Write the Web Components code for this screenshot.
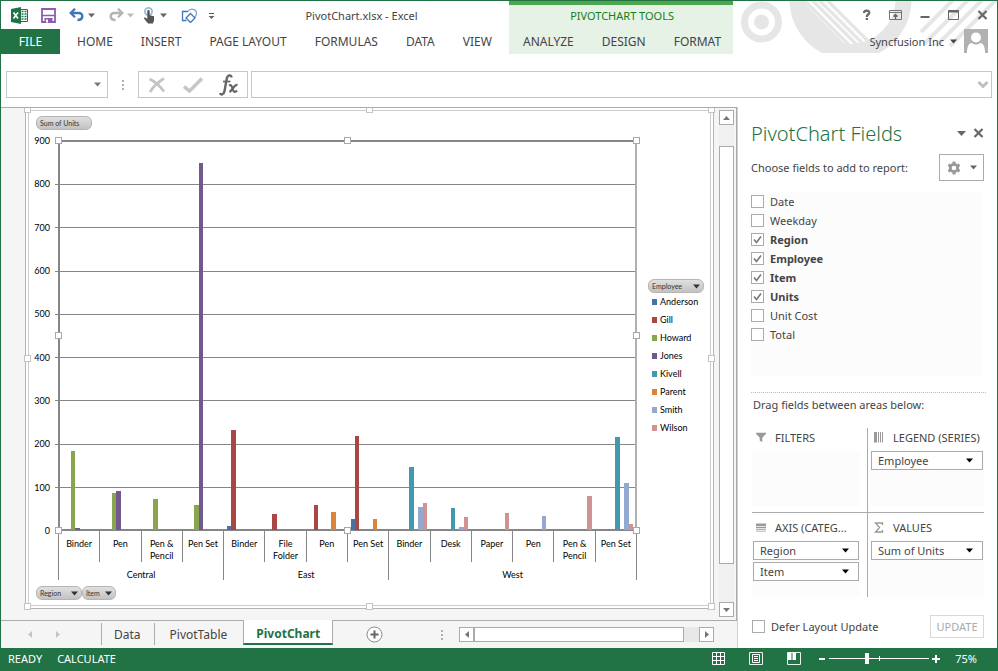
<!DOCTYPE html>
<html lang="en">
<head>
<meta charset="utf-8">
<title>PivotChart.xlsx - Excel</title>
<style>
html, body { margin: 0; height: 100%; }
body { font-family: "Noto Sans", "Open Sans", sans-serif; font-size: 11px; color: #444; background: #fff; --green: #217346; --line: #ababab; }
</style>
</head>
<body>
<excel-window></excel-window>
<script>
const define = (name, css, html, setup) => {
  const tpl = document.createElement('template');
  tpl.innerHTML = `<style>:host,*{box-sizing:border-box}button,input,select{font:inherit;color:inherit;margin:0}button{background:none;border:0;padding:0;display:inline-flex;align-items:center;justify-content:center}${css}</style>`;
  customElements.define(name, class extends HTMLElement {
    constructor() { super(); this.attachShadow({ mode: 'open' }); }
    connectedCallback() {
      if (this.shadowRoot.childNodes.length) return;
      this.shadowRoot.append(tpl.content.cloneNode(true));
      const body = document.createElement('template');
      body.innerHTML = typeof html === 'function' ? html(this) : html;
      this.shadowRoot.append(body.content.cloneNode(true));
      if (setup) setup(this);
    }
  });
};

/* Icons: [width, height, drawing] */
const icons = {
  excel: [17, 17, '<path d="M9 2.5h7.5v12H9z" fill="#fff" stroke="#217346"/><path d="M10.5 4.5h2M13.5 4.5h2M10.5 7h2M13.5 7h2M10.5 9.500h2M13.500 9.500h2M10.500 12h2M13.500 12h2" stroke="#217346" stroke-width="1.500"/><path d="M0 2L10 0v17L0 15z" fill="#217346"/><path d="M2.500 5.500L7 11.500M7 5.500L2.500 11.500" stroke="#fff" stroke-width="1.700"/>'],
  save: [15, 15, '<path d="M1 1h13v13H1z" fill="#fff" stroke="#8e5bb0" stroke-width="1.800"/><path d="M1 7.500h13" stroke="#8e5bb0" stroke-width="1.500"/><path d="M3.500 10h8v4.500h-8z" fill="#8e5bb0"/><path d="M5 11.500h2v3H5z" fill="#fff"/>'],
  undo: [16, 14, '<path d="M3 5H9.500C15 5 14.500 12 8.500 12" fill="none" stroke="#3f77b8" stroke-width="2.400"/><path d="M6 .7L1.700 5 6 9.300" fill="none" stroke="#3f77b8" stroke-width="2.300"/>'],
  redo: [16, 14, '<path d="M13 5H6.500C1 5 1.500 12 7.500 12" fill="none" stroke="#b4b4b4" stroke-width="2.400"/><path d="M10 .7L14.300 5 10 9.300" fill="none" stroke="#b4b4b4" stroke-width="2.300"/>'],
  touch: [14, 17, '<circle cx="5.500" cy="4.500" r="3.600" fill="none" stroke="#9dbbd8" stroke-width="1.800"/><path d="M4.300 4.300c0-1.700 2.400-1.700 2.400 0v4l4.300 1v4.200l-1 3H5L1 11.500c-.5-1.500 1.500-1.500 3.300.5z" fill="#555"/>'],
  shapes: [17, 15, '<path d="M7 3.500H1.500v9h4" fill="none" stroke="#3f77b8" stroke-width="1.300"/><path d="M7 3.500C9 0 15.500.5 15.500 5.500c0 2-1 3-2 4" fill="none" stroke="#7ba6d3" stroke-width="1.300"/><path d="M9.500 5.500L14 10l-4.500 4.500L5 10z" fill="#fff" stroke="#3f77b8" stroke-width="1.300"/>'],
  custom: [7, 9, '<path d="M1 2.500h5" stroke="#555"/><path d="M.5 5h6l-3 3z" fill="#666"/>'],
  caret: [7, 5, '<path d="M0 .5h7l-3.500 4z" fill="currentColor"/>'],
  bigcaret: [9, 5, '<path d="M0 0h9L4.500 5z" fill="currentColor"/>'],
  up: [9, 6, '<path d="M1 5h7L4.500 1z" fill="#777"/>'],
  down: [9, 6, '<path d="M1 1h7L4.500 5z" fill="#777"/>'],
  left: [6, 9, '<path d="M5 1v7L1 4.500z" fill="currentColor"/>'],
  right: [6, 9, '<path d="M1 1v7l4-3.500z" fill="currentColor"/>'],
  help: [10, 12, '<path d="M2 4C2 .8 7.500 .8 7.300 3.700 7 5.500 4.800 5.500 4.800 8" fill="none" stroke="#666" stroke-width="2.200"/><path d="M3.700 9h2.300v2H3.700z" fill="#666"/>'],
  ribbonopt: [13, 11, '<path d="M.5 .5h12v9H.500zM.500 2.500h12" fill="none" stroke="#777"/><path d="M6.500 9V4.500M4.500 6.500l2-2 2 2" fill="none" stroke="#666" stroke-width="1.300"/>'],
  minimise: [10, 10, '<path d="M.5 7h9" stroke="#666" stroke-width="2"/>'],
  maximise: [11, 10, '<path d="M.500 .5h10v9H.500z" fill="none" stroke="#666"/><path d="M0 1.500h11" stroke="#666" stroke-width="2"/>'],
  close: [11, 10, '<path d="M1.500 1l8 8M9.500 1l-8 8" stroke="#6a6a6a" stroke-width="2.300"/>'],
  avatar: [24, 24, '<path d="M0 0h24v24H0z" fill="#b1b1b1"/><circle cx="12" cy="8.500" r="5" fill="#fff"/><path d="M3 24c0-7 2-10 5-10 2 2 6 2 8 0 3 0 5 3 5 10h-1.500v-5v5H4.500z" fill="#fff"/>'],
  grip: [3, 12, '<path d="M0 1h2v2H0zM0 5h2v2H0zM0 9h2v2H0z" fill="#b0b0b0"/>'],
  cancel: [18, 16, '<path d="M1.500 2C6 4 12 9 16 14.500M16 1.500C10 5 5 10 2 15" fill="none" stroke="#c4c4c4" stroke-width="2.700"/>'],
  enter: [20, 16, '<path d="M1 9.500l5.500 4.500L19 1.500" fill="none" stroke="#c6c6c6" stroke-width="3.500"/>'],
  fx: [20, 22, '<path d="M12.500 3.500C12.500.5 8.500.5 7.700 5L5.500 17c-.7 4-4 4.500-4.300 2" fill="none" stroke="#666" stroke-width="2.400"/><path d="M4 7.500h7.500" stroke="#666" stroke-width="1.700"/><path d="M10 11.500c4-2 3 6 5.500 6.300 1 .1 2-.6 2.500-1.300M18.500 11c-3-.8-5 5-8 7" fill="none" stroke="#666" stroke-width="2.200"/>'],
  chevron: [12, 9, '<path d="M1.500 2L6 6.500 10.500 2" fill="none" stroke="#c0c0c0" stroke-width="3"/>'],
  gear: [14, 14, '<circle cx="7" cy="7" r="3.700" fill="none" stroke="#999" stroke-width="2.800"/><path d="M7 .5v2.500M7 11v2.500M1.400 3.700l2 1.200M10.600 9.100l2 1.200M1.400 10.300l2-1.200M10.600 4.900l2-1.200" stroke="#999" stroke-width="3"/>'],
  filter: [12, 12, '<path d="M0 1h12v1L7.500 7v5l-3-1.500V7L0 2z" fill="#999"/>'],
  legend: [10, 11, '<path d="M0 0h3v10.500H0zM4 0h1v10.500H4zM6 0h1v10.500H6zM8 0h1v10.500H8z" fill="#999"/>'],
  axis: [11, 11, '<path d="M0 1h11v3H0zM0 5h11v1H0zM0 7h11v1H0zM0 9h11v1H0z" fill="#999"/>'],
  sigma: [10, 11, '<path d="M8.500 3V1H1.500L5.500 5.500 1.500 10h7V8" fill="none" stroke="#999" stroke-width="1.400"/>'],
  add: [17, 17, '<circle cx="8.500" cy="8.500" r="7.500" fill="#fff" stroke="#888"/><path d="M8.500 4.500v8M4.500 8.500h8" stroke="#666" stroke-width="2"/>'],
  normal: [13, 13, '<path d="M.5 .5h12v12H.500zM4.500 0v13M8.500 0v13M0 4.500h13M0 8.500h13" fill="none" stroke="#fff"/>'],
  layout: [14, 13, '<path d="M.5 .5h13v12H.500z" fill="none" stroke="#e8f3ec"/><path d="M3.500 2.500h7v8h-7zM5 4.500h4M5 6.500h4M5 8.500h4" fill="none" stroke="#fff"/>'],
  breaks: [14, 13, '<path d="M.5 .5h13v12H.500z" fill="none" stroke="#e8f3ec"/><path d="M1 1h3.500v7H1zM5.500 1H9v7H5.500z" fill="#fff"/>'],
  minus: [8, 8, '<path d="M1 4h6" stroke="#fff" stroke-width="2"/>'],
  plus: [8, 8, '<path d="M0 4h8M4 0v8" stroke="#fff" stroke-width="2"/>'],
  tick: [13, 13, '<path d="M3 6.500l2.500 3L10 3.500" fill="none" stroke="#777" stroke-width="1.600"/>']
};
define('ui-icon', ':host{display:inline-flex;flex:none}svg{display:block}', el => {
  const [w, h, d] = icons[el.getAttribute('name')];
  return `<svg width="${w}" height="${h}" viewBox="0 0 ${w} ${h}" aria-hidden="true">${d}</svg>`;
});

define('quick-access', `
  :host{display:flex;align-items:center;padding-left:10px;color:#666}
  button{height:28px;width:16px} .save{width:42px} .redo{margin-left:11px} .touch{margin-left:7px;width:14px} .shapes{margin:0 8px 0 12px} .c{width:12px} .dim{color:#bbb}`,
  `<button aria-label="Excel"><ui-icon name="excel"></ui-icon></button>
   <button class="save" aria-label="Save"><ui-icon name="save"></ui-icon></button>
   <button aria-label="Undo"><ui-icon name="undo"></ui-icon></button><button class="c" aria-label="Undo list"><ui-icon name="caret"></ui-icon></button>
   <button class="redo" aria-label="Redo"><ui-icon name="redo"></ui-icon></button><button class="c dim" aria-label="Redo list"><ui-icon name="caret"></ui-icon></button>
   <button class="touch" aria-label="Touch mode"><ui-icon name="touch"></ui-icon></button><button class="c" aria-label="Touch list"><ui-icon name="caret"></ui-icon></button>
   <button class="shapes" aria-label="Shapes"><ui-icon name="shapes"></ui-icon></button>
   <button aria-label="Customize" class="c"><ui-icon name="custom"></ui-icon></button>`);

define('ribbon-tab', `
  :host{display:block} button{height:25px;padding:0 14px;font-size:12px;white-space:nowrap}
  :host([file]) button{background:var(--green);color:#fff;width:59px;padding:0;margin-right:3px}`,
  '<button role="tab"><slot></slot></button>');

define('window-header', `
  :host{display:grid;grid-template-columns:minmax(0,508fr) 224px minmax(0,264fr);height:53px}
  .left{display:grid;grid-template-rows:28px 25px}
  .title{display:flex} .title span{flex:1;text-align:center;font-size:11px;line-height:29px;padding-right:3px}
  .tabs{display:flex}
  .tools{background:#e6f2e6;border-top:4px solid #4ca64c;display:grid;grid-template-rows:24px 25px}
  .tools p{margin:0;text-align:center;color:#128012;font-size:11px;line-height:22px;padding-right:3px}
  .tools .tabs{padding-right:3px;justify-content:center}
  .right{display:grid;grid-template-rows:28px 25px}
  .deco{grid-area:1/1/3/2;justify-self:start;overflow:hidden;height:53px}
  .win{grid-area:1/1;display:flex;justify-content:flex-end} .win button{width:29px;height:28px}
  .who{grid-area:2/1;display:flex;justify-content:flex-end;align-items:flex-start;padding-right:9px;gap:7px}
  .who button{height:24px;gap:6px;font-size:11px}`,
  `<div class="left"><div class="title"><quick-access></quick-access><span>PivotChart.xlsx - Excel</span></div>
   <div class="tabs" role="tablist"><ribbon-tab file>FILE</ribbon-tab><ribbon-tab>HOME</ribbon-tab><ribbon-tab>INSERT</ribbon-tab><ribbon-tab>PAGE LAYOUT</ribbon-tab><ribbon-tab>FORMULAS</ribbon-tab><ribbon-tab>DATA</ribbon-tab><ribbon-tab>VIEW</ribbon-tab></div></div>
   <div class="tools"><p>PIVOTCHART TOOLS</p><div class="tabs" role="tablist"><ribbon-tab>ANALYZE</ribbon-tab><ribbon-tab>DESIGN</ribbon-tab><ribbon-tab>FORMAT</ribbon-tab></div></div>
   <div class="right">
    <svg class="deco" width="264" height="53" viewBox="733 1 264 53" aria-hidden="true">
      <defs><clipPath id="disc"><circle cx="850.5" cy="-1" r="60"/></clipPath><clipPath id="frame"><path d="M733 1h264v52H733z"/></clipPath></defs>
      <g fill="none" stroke="#e6e6e6" clip-path="url(#frame)">
        <circle cx="761.5" cy="22" r="17" stroke-width="7"/><circle cx="761.5" cy="22" r="7.500" fill="#e6e6e6" stroke="none"/>
        <circle cx="850.5" cy="-1" r="53" stroke-width="16"/>
        <g clip-path="url(#disc)" stroke-width="3.500"><path d="M803 -1l60 60M811 -1l60 60M818 -1l60 60M826 -1l60 60"/><path d="M794 0l60 60" stroke-width="10"/></g>
        <path d="M957 -4l-36 36M972 -4l-48 48M986 -4l-50 50M1000 -4l-50 50" stroke-width="4"/>
      </g></svg>
    <div class="win"><button aria-label="Help"><ui-icon name="help"></ui-icon></button><button aria-label="Ribbon options"><ui-icon name="ribbonopt"></ui-icon></button><button aria-label="Minimize"><ui-icon name="minimise"></ui-icon></button><button aria-label="Maximize"><ui-icon name="maximise"></ui-icon></button><button aria-label="Close"><ui-icon name="close"></ui-icon></button></div>
    <div class="who"><button>Syncfusion Inc <ui-icon name="caret"></ui-icon></button><ui-icon name="avatar"></ui-icon></div>
   </div>`);

define('formula-bar', `
  :host{display:flex;align-items:stretch;padding:17px 5px 9px;height:53px}
  .box{border:1px solid #c6c6c6;display:flex;align-items:center;background:#fff}
  .name{width:102px;padding-right:6px;color:#777} input{flex:1;min-width:0;border:0;outline:0;background:none;padding:0 4px}
  .grip{width:30px;display:flex;align-items:center;justify-content:center}
  .fn{width:110px;margin-right:3px} .fn button{flex:1;height:100%} .text{flex:1;padding-right:2px}`,
  `<div class="box name"><input aria-label="Name box"><ui-icon name="caret"></ui-icon></div>
   <div class="grip"><ui-icon name="grip"></ui-icon></div>
   <div class="box fn"><button aria-label="Cancel"><ui-icon name="cancel"></ui-icon></button><button aria-label="Enter"><ui-icon name="enter"></ui-icon></button><button aria-label="Insert function"><ui-icon name="fx"></ui-icon></button></div>
   <div class="box text"><input aria-label="Formula"><ui-icon name="chevron"></ui-icon></div>`);

define('scroll-bar', `
  :host{display:flex;background:#e8e8e8;color:#777} button{width:15px;height:15px;background:#fff;border:1px solid var(--line);flex:none}
  .thumb{background:#fff;border:1px solid var(--line)}
  :host([vertical]){flex-direction:column;width:15px;background:#f0f0f0} .lead{flex:0 0 auto}
  :host([vertical]) .lead{height:21px} :host([vertical]) .thumb{flex:1} :host([vertical]) .tail{height:38px}
  :host(:not([vertical])) .thumb{flex:1} :host(:not([vertical])) .tail{width:15px}`,
  el => { const v = el.hasAttribute('vertical'); return `<button aria-label="Back"><ui-icon name="${v ? 'up' : 'left'}"></ui-icon></button><div class="lead"></div><div class="thumb"></div><div class="tail"></div><button aria-label="Forward"><ui-icon name="${v ? 'down' : 'right'}"></ui-icon></button>`; });

define('field-pill', `
  :host{display:inline-flex} button{height:14px;min-width:var(--w,56px);padding:0 3px;justify-content:space-between;gap:3px;border:1px solid #b5b5b5;border-radius:6px;background:linear-gradient(#e0e0e0,#c2c2c2);font:7px "Lato",sans-serif;color:#333;white-space:nowrap}`,
  el => `<button><slot></slot>${el.hasAttribute('menu') ? '<ui-icon name="caret"></ui-icon>' : ''}</button>`);

/* Eight grips round a selected box */
define('grip-frame', `
  :host{position:absolute;inset:0;pointer-events:none;display:grid;grid-template-columns:repeat(3,7px);grid-template-rows:repeat(3,7px);justify-content:space-between;align-content:space-between;margin:-2px;z-index:2}
  :host([wide]){margin:-5px}
  i{background:#fff;border:1px solid #c4c4c4} :host([wide]) i{border-color:#a8a8a8} .skip{visibility:hidden}`,
  '<i></i><i></i><i></i><i></i><i class="skip"></i><i></i><i></i><i></i><i></i>');

const series = [['Anderson', '#4572a7'], ['Gill', '#aa4643'], ['Howard', '#89a54e'], ['Jones', '#71588f'], ['Kivell', '#4198af'], ['Parent', '#db843d'], ['Smith', '#93a9cf'], ['Wilson', '#d19392']];
const regions = [
  ['Central', [['Binder', { 2: 183, 3: 4 }], ['Pen', { 2: 86, 3: 90 }], ['Pen & Pencil', { 2: 72 }], ['Pen Set', { 2: 58, 3: 848 }]]],
  ['East', [['Binder', { 0: 9, 1: 231 }], ['File Folder', { 1: 37 }], ['Pen', { 1: 57, 5: 42 }], ['Pen Set', { 0: 26, 1: 217, 5: 26 }]]],
  ['West', [['Binder', { 4: 146, 6: 53, 7: 63 }], ['Desk', { 4: 51, 6: 7, 7: 30 }], ['Paper', { 7: 39 }], ['Pen', { 6: 32 }], ['Pen & Pencil', { 7: 78 }], ['Pen Set', { 4: 215, 6: 109, 7: 14 }]]]
];
const items = regions.flatMap(r => r[1]);
const esc = s => s.replace('&', '&amp;');

define('pivot-chart', `
  :host{display:block;position:relative;background:#fff;border:1px solid #b4b4b4;border-top:0;padding:2px;font:9px/12px "Lato",sans-serif;color:#000}
  .in{height:100%;border:1px solid #ccc;display:grid;grid-template-columns:29px minmax(0,1fr) 73px;grid-template-rows:29px minmax(0,1fr) 49px 25px}
  .top{grid-area:1/1/2/3;padding:5px 0 0 7px}
  .y{grid-area:2/1;display:flex;flex-direction:column;justify-content:space-between;margin:-5px 0 -6px;text-align:right;padding-right:8px}
  .plot{grid-area:2/2;display:grid;position:relative;border:2px solid #868686;border-color:#868686 #b0b0b0 #868686 #868686}
  .lines{grid-area:1/1;display:grid;grid-template-rows:repeat(9,1fr);margin:-1px 0 -1px -5px} .lines i{border-top:1px solid #868686}
  .bars{grid-area:1/1;display:grid;grid-template-columns:repeat(14,1fr);z-index:1;margin:-2px -1px -1px}
  .group{display:grid;grid-template-columns:repeat(8,1fr);grid-template-rows:100%;align-items:end;padding:0 3px}
  .x{grid-area:3/2;display:grid;grid-template-columns:repeat(14,1fr);grid-template-rows:31px 18px;text-align:center;border-right:1px solid #868686}
  .x span{border-left:1px solid #868686;padding:7px 4px 0;min-width:0} .x .r{padding:7px 0 0}
  .x .s{padding-inline:0;white-space:nowrap}
  .bottom{grid-area:4/1/5/3;padding:6px 0 0 7px;display:flex;align-items:flex-start}
  .legend{grid-area:1/3/5/4;align-self:center;padding-left:11px}
  ul{list-style:none;margin:0;padding:0 0 0 4px} li{display:flex;align-items:center;gap:3px;height:18px} li i{width:5px;height:6px}`,
  () => `<div class="in"><div class="top"><field-pill>Sum of Units</field-pill></div>
   <div class="y">${[900, 800, 700, 600, 500, 400, 300, 200, 100, 0].map(n => `<span>${n}</span>`).join('')}</div>
   <div class="plot"><div class="lines">${'<i></i>'.repeat(9)}</div>
    <div class="bars">${items.map(([, v]) => `<div class="group">${Object.entries(v).map(([k, n]) => `<i style="grid-area:1/${+k + 1};height:${(n / 9).toFixed(1)}%;background:${series[k][1]}"></i>`).join('')}</div>`).join('')}</div><grip-frame wide></grip-frame></div>
   <div class="x">${items.map(([n]) => `<span${n.includes('Set') ? ' class="s"' : ''}>${esc(n)}</span>`).join('')}${regions.map(([n, a]) => `<span class="r" style="grid-column:span ${a.length}">${n}</span>`).join('')}</div>
   <div class="bottom"><field-pill menu style="--w:46px">Region</field-pill><field-pill menu style="--w:34px">Item</field-pill></div>
   <div class="legend"><field-pill menu>Employee</field-pill><ul>${series.map(([n, c]) => `<li><i style="background:${c}"></i>${n}</li>`).join('')}</ul></div></div><grip-frame></grip-frame>`);

define('sheet-tabs', `
  :host{display:flex;height:28px;background:#f5f5f5;border-top:1px solid var(--line);font-size:12px;align-items:stretch;padding-right:23px}
  .nav{width:100px;padding-left:26px;display:flex;gap:22px;color:#c4c4c4;align-items:center}
  .tab{border-left:1px solid var(--line);padding:0 13px 0 12px;height:22px;margin-top:2px;white-space:nowrap} .pt{padding:0 16px 0 15px}
  .on{background:#fff;color:var(--green);font-weight:700;border:1px solid var(--line);border-top:0;border-bottom:2px solid var(--green);height:25px;margin:-1px 0 0;padding:3px 12px 0}
  .add{width:82px} .grip{margin-left:auto;display:flex;align-items:center;width:18px}
  scroll-bar{width:255px;align-self:center}`,
  `<div class="nav"><ui-icon name="left"></ui-icon><ui-icon name="right"></ui-icon></div>
   <button class="tab">Data</button><button class="tab pt">PivotTable</button><button class="tab on">PivotChart</button><button class="add" aria-label="New sheet"><ui-icon name="add"></ui-icon></button>
   <div class="grip"><ui-icon name="grip"></ui-icon></div><scroll-bar></scroll-bar>`);

define('field-check', `
  :host{display:block} label{display:flex;align-items:center;gap:6px;height:19px}
  .b{display:grid;width:13px;height:13px} input,ui-icon{grid-area:1/1}
  input{appearance:none;width:13px;height:13px;border:1px solid var(--line);background:#fff} ui-icon{visibility:hidden;pointer-events:none}
  input:checked + ui-icon{visibility:visible} :host([checked]) label{font-weight:700}`,
  el => `<label><span class="b"><input type="checkbox"${el.hasAttribute('checked') ? ' checked' : ''}><ui-icon name="tick"></ui-icon></span><slot></slot></label>`);

define('area-field', `
  :host{display:grid;height:19px;align-items:center} select,ui-icon{grid-area:1/1}
  select{appearance:none;width:100%;height:19px;border:1px solid var(--line);border-radius:0;background:#fff;padding:0 20px 0 6px;line-height:16px}
  ui-icon{justify-self:end;margin-right:10px;color:#000;pointer-events:none}`,
  el => `<select aria-label="${el.getAttribute('value')}"><option>${el.getAttribute('value')}</option></select><ui-icon name="caret"></ui-icon>`);

define('drop-area', `
  :host{display:flex;flex-direction:column;min-width:0} h3{margin:0 0 3px;font-size:11px;font-weight:400;height:20px;display:flex;align-items:center;gap:9px;padding:0 0 2px 4px;white-space:nowrap}
  ui-icon{width:10px} .list{flex:1;background:#fcfcfc;padding:0 1px;display:flex;flex-direction:column;gap:2px}`,
  el => `<h3><ui-icon name="${el.getAttribute('icon')}"></ui-icon>${el.getAttribute('heading')}</h3><div class="list"><slot></slot></div>`);

define('fields-pane', `
  :host{display:flex;flex-direction:column;padding:12px 13px 10px;background:#fff}
  .head{display:flex;align-items:center;height:28px;gap:7px;color:#666;margin-bottom:7px} h2{margin:0;flex:1;font-size:20px;font-weight:300;color:var(--green);white-space:nowrap}
  .sub{display:flex;justify-content:space-between;align-items:center;margin-bottom:11px} .gear{width:45px;height:27px;border:1px solid var(--line);gap:9px;color:#666}
  .fields{flex:1;background:#fcfcfc;margin:0 1px 16px 0}
  .drag{border-top:1px dotted #bbb;padding:3px 0 0 2px;height:36px;line-height:18px;margin-right:-2px}
  .areas{display:grid;grid-template-columns:116px minmax(0,1fr);grid-template-rows:85px 84px;margin-left:1px}
  .areas drop-area:nth-child(odd){border-right:1px solid var(--line);padding-right:7px}
  .areas drop-area:nth-child(even){padding-left:2px}
  .areas drop-area:nth-child(-n+2){border-bottom:1px solid var(--line);padding-bottom:6px}
  .areas drop-area:nth-child(n+3){padding-top:5px}
  .foot{display:flex;justify-content:space-between;align-items:center;margin:18px 0 0 1px} .foot button{width:54px;height:23px;border:1px solid #d8d8d8;color:#aaa}`,
  `<div class="head"><h2>PivotChart Fields</h2><button aria-label="Pane options"><ui-icon name="bigcaret"></ui-icon></button><button aria-label="Close pane"><ui-icon name="close"></ui-icon></button></div>
   <div class="sub"><span>Choose fields to add to report:</span><button class="gear" aria-label="Tools"><ui-icon name="gear"></ui-icon><ui-icon name="caret"></ui-icon></button></div>
   <div class="fields"><field-check>Date</field-check><field-check>Weekday</field-check><field-check checked>Region</field-check><field-check checked>Employee</field-check><field-check checked>Item</field-check><field-check checked>Units</field-check><field-check>Unit Cost</field-check><field-check>Total</field-check></div>
   <div class="drag">Drag fields between areas below:</div>
   <div class="areas">
    <drop-area icon="filter" heading="FILTERS"></drop-area>
    <drop-area icon="legend" heading="LEGEND (SERIES)"><area-field value="Employee"></area-field></drop-area>
    <drop-area icon="axis" heading="AXIS (CATEG..."><area-field value="Region"></area-field><area-field value="Item"></area-field></drop-area>
    <drop-area icon="sigma" heading="VALUES"><area-field value="Sum of Units"></area-field></drop-area></div>
   <div class="foot"><field-check>Defer Layout Update</field-check><button disabled>UPDATE</button></div>`);

define('status-bar', `
  :host{display:flex;align-items:center;height:23px;background:var(--green);color:#fff;padding:0 20px 2px 7px;gap:15px;font-size:11px}
  .views{margin-left:auto;display:flex;gap:24px;margin-right:2px} .zoom{display:flex;align-items:center;gap:3px} .zoom button{width:8px;height:16px}
  input{appearance:none;width:100px;height:11px;background:linear-gradient(#fff,#fff) 50px 50%/1px 5px no-repeat,linear-gradient(#fff,#fff) 0 50%/100% 1px no-repeat}
  input::-webkit-slider-thumb{appearance:none;width:4px;height:11px;background:#fff}`,
  `<span>READY</span><span>CALCULATE</span><div class="views"><button aria-label="Normal"><ui-icon name="normal"></ui-icon></button><button aria-label="Page layout"><ui-icon name="layout"></ui-icon></button><button aria-label="Page breaks"><ui-icon name="breaks"></ui-icon></button></div>
   <div class="zoom"><button aria-label="Zoom out"><ui-icon name="minus"></ui-icon></button><input type="range" aria-label="Zoom" min="0" max="100" value="37"><button aria-label="Zoom in"><ui-icon name="plus"></ui-icon></button></div><span>75%</span>`);

define('excel-window', `
  :host{display:flex;flex-direction:column;min-height:100vh;border:1px solid var(--green);border-bottom:0;background:#fff}
  .work{flex:1;display:grid;grid-template-columns:minmax(0,1fr) 259px}
  .book{display:flex;flex-direction:column;border-right:1px solid #d0d0d0}
  .canvas{flex:1;display:flex;background:#f5f5f5;border:1px solid var(--line);border-left:0;border-bottom:0;padding:0 2px 0 24px;gap:5px;overflow:hidden}
  pivot-chart{flex:1;min-width:0;margin-bottom:11px} scroll-bar{margin:2px 0 3px}`,
  `<window-header></window-header><formula-bar></formula-bar>
   <div class="work"><div class="book"><div class="canvas"><pivot-chart></pivot-chart><scroll-bar vertical></scroll-bar></div><sheet-tabs></sheet-tabs></div><fields-pane></fields-pane></div>
   <status-bar></status-bar>`);
</script>
</body>
</html>
